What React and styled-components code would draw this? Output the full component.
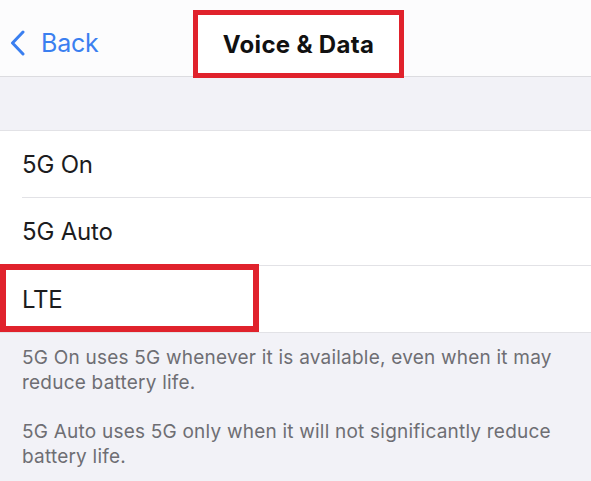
import styled, { createGlobalStyle } from "styled-components"

const GlobalStyle = createGlobalStyle`
  html, body {
    margin: 0;
    padding: 0;
    background: #f2f2f7;
  }
  body {
    font-family: Inter, "Liberation Sans", sans-serif;
    -webkit-font-smoothing: antialiased;
  }
`

const Page = styled.div`
  width: 591px;
  height: 481px;
  overflow: hidden;
  background: #f2f2f7;
`

const NavBar = styled.div`
  display: flex;
  align-items: flex-start;
  height: 76px;
  background: #fcfcfd;
  border-bottom: 1px solid #dcdce0;
`

const BackButton = styled.div`
  display: flex;
  align-items: center;
  gap: 16px;
  width: 193px;
  height: 100%;
  padding: 9px 0 0 10px;
  box-sizing: border-box;
  color: #3a7ff0;
  font-size: 25px;
  letter-spacing: -0.2px;
`

const TitleBox = styled.div`
  position: relative;
  z-index: 1;
  display: flex;
  align-items: center;
  justify-content: center;
  width: 211px;
  height: 68px;
  margin-top: 10px;
  padding-top: 1px;
  box-sizing: border-box;
  border: 5px solid #e0222c;
  background: #fff;
  color: #111;
  font-size: 24px;
  font-weight: 700;
  letter-spacing: 0.3px;
`

const Spacer = styled.div`
  height: 53px;
`

const List = styled.div`
  background: #fff;
  border-top: 1px solid #e2e2e6;
  border-bottom: 1px solid #e2e2e6;
`

const Row = styled.div`
  position: relative;
  display: flex;
  align-items: center;
  height: ${(p) => p.$height}px;
  padding-left: 22px;
  color: #1c1c1e;
  font-size: 24px;
  letter-spacing: -0.2px;
`

const Highlight = styled.div`
  position: absolute;
  left: 0;
  top: -2px;
  width: 259px;
  height: 68px;
  box-sizing: border-box;
  border: 6px solid #e0222c;
`

const Separator = styled.div`
  height: 1px;
  margin-left: 22px;
  background: #e2e2e6;
`

const Footer = styled.div`
  padding: 12px 20px 0 22px;
  color: #6e6e73;
  font-size: 19px;
  line-height: 25px;
  letter-spacing: 0.22px;

  p {
    margin: 0 0 24px;
  }
`

function Chevron() {
  return (
    <svg width="15" height="26" viewBox="0 0 15 26">
      <path d="M13 2 L2.5 13 L13 24" fill="none" stroke="#3a7ff0" strokeWidth="3" strokeLinecap="round" strokeLinejoin="round" />
    </svg>
  )
}

export default function App() {
  return (
    <Page>
      <GlobalStyle />
      <NavBar>
        <BackButton>
          <Chevron />
          <span>Back</span>
        </BackButton>
        <TitleBox>Voice &amp; Data</TitleBox>
      </NavBar>
      <Spacer />
      <List>
        <Row $height={66}>5G On</Row>
        <Separator />
        <Row $height={67}>5G Auto</Row>
        <Separator />
        <Row $height={66}>
          LTE
          <Highlight />
        </Row>
      </List>
      <Footer>
        <p>5G On uses 5G whenever it is available, even when it may reduce battery life.</p>
        <p>5G Auto uses 5G only when it will not significantly reduce battery life.</p>
      </Footer>
    </Page>
  )
}
